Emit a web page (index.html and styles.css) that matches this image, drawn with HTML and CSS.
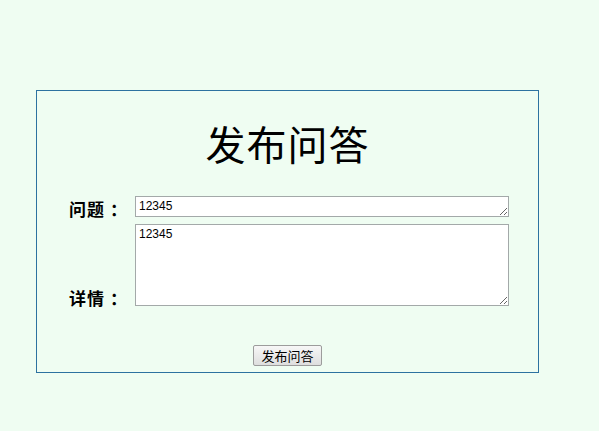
FILE: index.html
```html
<!DOCTYPE html>
<html lang="zh-CN">
<head>
    <meta charset="UTF-8">
    <meta name="viewport" content="width=device-width, initial-scale=1.0">
    <title>发布问答</title>
    <link rel="stylesheet" href="styles.css">
</head>
<body>
    <div class="panel">
        <h2 class="title">发布问答</h2>
        <div class="row">
            <label class="label" for="question">问题<span class="colon">：</span></label>
            <textarea class="field field-short" id="question">12345</textarea>
        </div>
        <div class="row">
            <label class="label" for="detail">详情<span class="colon">：</span></label>
            <textarea class="field field-long" id="detail">12345</textarea>
        </div>
        <div class="actions">
            <button class="submit">发布问答</button>
        </div>
    </div>
</body>
</html>
```

FILE: styles.css
```css
body {
    margin: 0;
    background-color: #effdf2;
    font-family: "Noto Sans CJK SC", sans-serif;
}
.panel {
    box-sizing: border-box;
    width: 503px;
    height: 283px;
    margin: 90px 0 0 36px;
    border: 1px solid #2d72a0;
}
.title {
    margin: 32px 0 0;
    font-size: 40px;
    line-height: 40px;
    font-weight: 400;
    letter-spacing: 1px;
    text-align: center;
    color: #000;
}
.row {
    display: flex;
    align-items: flex-end;
    margin-top: 7px;
}
.title + .row {
    margin-top: 33px;
}
.label {
    width: 66px;
    margin-left: 32px;
    margin-bottom: -2px;
    font-size: 17px;
    font-weight: bold;
    line-height: 20px;
    letter-spacing: 1px;
}
.colon {
    margin-left: 5px;
}
.field {
    box-sizing: border-box;
    width: 374px;
    margin: 0;
    padding: 2px 3px;
    border: 1px solid #a3a9a9;
    background: #fff;
    font-family: "Liberation Sans", sans-serif;
    font-size: 12px;
    line-height: 14px;
    color: #000;
}
.field-short {
    height: 21px;
}
.field-long {
    height: 82px;
}
.actions {
    margin-top: 36px;
    text-align: center;
}
.submit {
    height: 21px;
    width: 69px;
    padding: 0;
    border: 1px solid #9c9c9c;
    border-radius: 2px;
    background: linear-gradient(#f7f7f7, #dedede);
    font-family: "Noto Sans CJK SC", sans-serif;
    font-size: 13px;
    line-height: 17px;
    color: #000;
}
```
